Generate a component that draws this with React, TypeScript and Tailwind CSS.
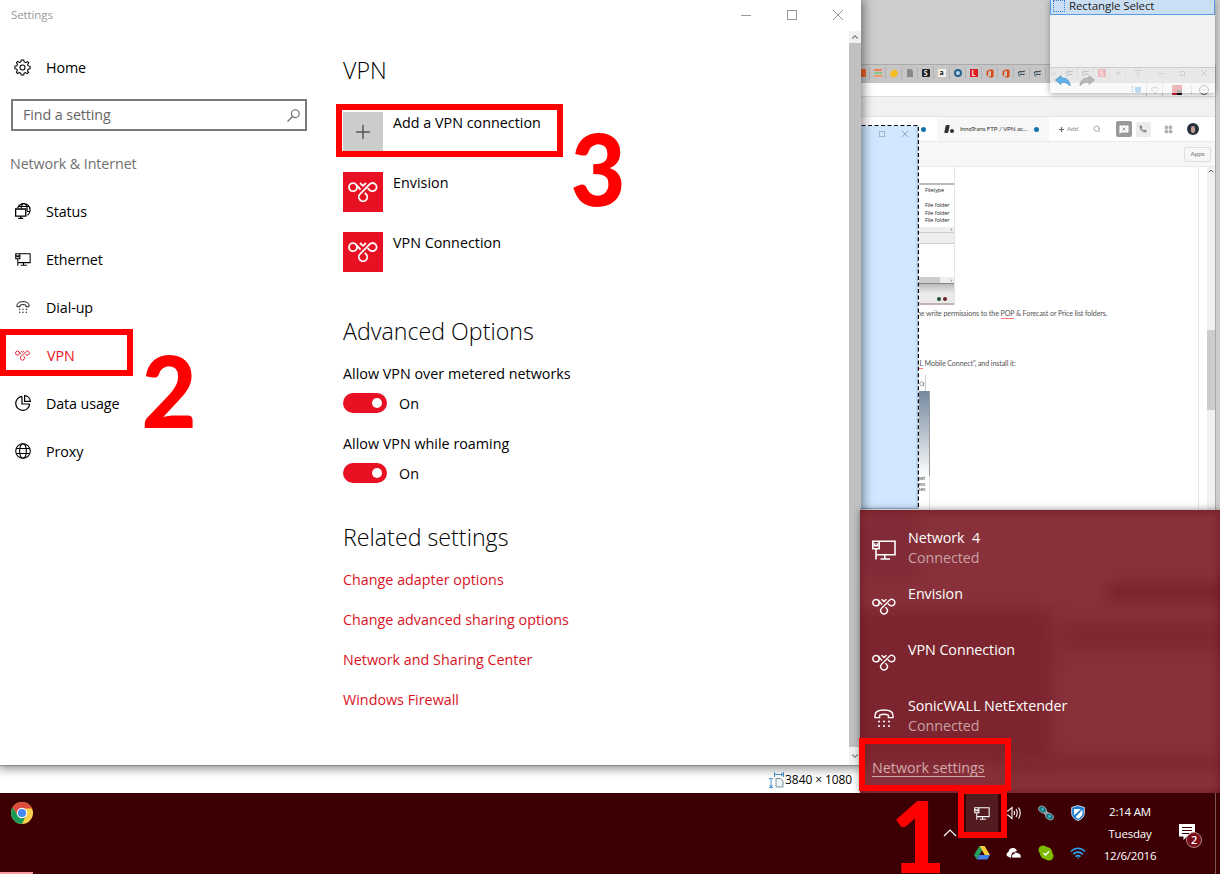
import React from "react";
import {
  Search,
  Plus,
  Phone,
  Heart,
  LayoutGrid,
  MessageSquareX,
  ChevronUp,
  ChevronDown,
} from "lucide-react";
import { clsx } from "clsx";

type IconProps = { className?: string };

// VpnIcon: looped ribbon used for every VPN entry
const VpnIcon = ({ className }: IconProps) => (
  <svg viewBox="0 0 30 20" className={className} fill="none" stroke="currentColor" strokeWidth="1.8">
    <circle cx="5" cy="5.2" r="4" />
    <path d="M8 2.6 L12.6 7.6" />
    <path d="M12 12.2 L21 3 A4.1 4.1 0 1 1 21.4 7.8 L19.6 6.2" />
    <path d="M12 12.2 A4.2 4.2 0 1 0 18.4 12.6 L16.8 10.8" />
    <path d="M12 1 L15 3.8 L18 1" />
  </svg>
);

// EthernetIcon: monitor with a plug in its upper left corner
const EthernetIcon = ({ className }: IconProps) => (
  <svg viewBox="0 0 24 20" className={className} fill="none" stroke="currentColor" strokeWidth="1.6">
    <path d="M7.5 1.2 H23 V14.8 H4.5 M12.8 15 V18.8 M8.5 19 H18" />
    <path d="M0.8 1.2 H7.2 V8.8 H0.8 Z M4 9 V19.5 M2.6 3.2 V5.8 H5.4 V3.2" />
  </svg>
);

const DialIcon = ({ className }: IconProps) => (
  <svg viewBox="0 0 20 18" className={className} fill="none" stroke="currentColor" strokeWidth="1.4">
    <path d="M1 6.6 C1 2.6 5.4 1 10 1 C14.6 1 19 2.6 19 6.6 V8.6 H14.4 V6.2 C12 5.2 8 5.2 5.6 6.2 V8.6 H1 Z" />
    <path d="M4 12.5 H6 M9 12.5 H11 M14 12.5 H16 M4 17 H6 M9 17 H11 M14 17 H16" strokeWidth="1.6" />
  </svg>
);

const GearIcon = () => (
  <svg viewBox="0 0 18 18" className="size-[17px]" fill="none" stroke="black" strokeWidth="1.1">
    <circle cx="9" cy="9" r="2.7" />
    <path d="M7.7 1 H10.3 L10.8 3.1 L12.4 3.8 L14.3 2.7 L15.6 4 L14.4 5.8 L15 7.3 L17 7.7 V10.3 L15 10.8 L14.3 12.3 L15.4 14.2 L14 15.5 L12.2 14.4 L10.7 15 L10.3 17 H7.7 L7.2 15 L5.7 14.3 L3.8 15.4 L2.5 14 L3.6 12.2 L3 10.7 L1 10.3 V7.7 L3 7.2 L3.7 5.7 L2.6 3.8 L4 2.5 L5.8 3.6 L7.3 3 Z" />
  </svg>
);

const GlobeIcon = () => (
  <svg viewBox="0 0 16 16" className="size-4" fill="none" stroke="black" strokeWidth="1.1">
    <circle cx="8" cy="8" r="7.3" />
    <ellipse cx="8" cy="8" rx="3.4" ry="7.3" />
    <path d="M1.4 5.5 H14.6 M1.4 10.5 H14.6" />
  </svg>
);

const StatusIcon = () => (
  <svg viewBox="0 0 16 16" className="size-4" fill="none" stroke="black" strokeWidth="1.1">
    <path d="M2.5 5 A6.5 6.5 0 1 1 12.5 12.3 M6 5.5 C6.5 2.5 7.5 .7 9 .7 C11 .7 12.6 4 12 8 M3.4 3.5 H14 M12 8.5 H15.5" />
    <path d="M.6 6 H10.8 V13.2 H.6 Z M5.8 13.2 V15.3 M3.2 15.4 H8.2" strokeWidth="1.3" />
  </svg>
);

const UsageIcon = () => (
  <svg viewBox="0 0 16 16" className="size-4" fill="none" stroke="black" strokeWidth="1.2">
    <path d="M7 1.4 A7 7 0 1 0 14.7 9 M7 1.4 V9 H14.7" />
    <path d="M9.6 .6 A6.3 6.3 0 0 1 15.4 6.4 H9.6 Z" />
  </svg>
);

const NAV_ITEMS = [
  { label: "Status", icon: <StatusIcon /> },
  { label: "Ethernet", icon: <EthernetIcon className="h-[13px] w-4" /> },
  { label: "Dial-up", icon: <DialIcon className="ml-px h-3 w-[14px]" /> },
  { label: "VPN", icon: <VpnIcon className="h-[11px] w-[15px]" />, active: true },
  { label: "Data usage", icon: <UsageIcon /> },
  { label: "Proxy", icon: <GlobeIcon /> },
];

const LINKS = [
  "Change adapter options",
  "Change advanced sharing options",
  "Network and Sharing Center",
  "Windows Firewall",
];

// Sidebar: left settings navigation
const Sidebar = () => (
  <div className="w-[343px] shrink-0 text-[14.3px]">
    <div className="mt-[13px] flex h-12 items-center pl-[14px]">
      <GearIcon />
      <span className="mt-[2px] ml-[15px]">Home</span>
    </div>
    <div className="mt-2 ml-[11px] flex h-8 w-[296px] items-center justify-between border-2 border-[#7a7a7a] pr-[5px] pl-[10px] text-[#666]">
      <span>Find a setting</span>
      <svg viewBox="0 0 13 13" className="size-[13px]" fill="none" stroke="currentColor" strokeWidth="1.1">
        <circle cx="8.3" cy="4.7" r="3.9" />
        <path d="M5.5 7.5 L.5 12.5" />
      </svg>
    </div>
    <div className="mt-[21px] mb-[11px] h-6 pl-[10px] leading-6 text-[#707070]">Network &amp; Internet</div>
    {NAV_ITEMS.map(item => (
      <div key={item.label} className={clsx("flex h-12 items-center pl-[15px]", item.active && "text-[#e81123]")}>
        <span className={clsx("w-[31px] shrink-0", item.active && "mr-px")}>{item.icon}</span>
        <span className="mt-[2px]">{item.label}</span>
      </div>
    ))}
  </div>
);

const Tile = ({ label, add }: { label: string; add?: boolean }) => (
  <div className="flex h-10 gap-[10px]">
    <div className={clsx("flex size-10 items-center justify-center", add ? "bg-[#ccc]" : "bg-[#e81123] text-white")}>
      {add ? <Plus className="size-[22px] text-[#555]" strokeWidth={1.6} /> : <VpnIcon className="h-5 w-[30px]" />}
    </div>
    <span className="leading-[22px]">{label}</span>
  </div>
);

const Toggle = ({ label }: { label: string }) => (
  <div className="h-[70px]">
    <div className="leading-6">{label}</div>
    <div className="mt-[7px] flex h-5 items-center gap-3">
      <div className="flex h-5 w-11 items-center justify-end rounded-full bg-[#e81123] pr-[5px]">
        <div className="size-[10px] rounded-full bg-white" />
      </div>
      <span className="mt-px">On</span>
    </div>
  </div>
);

const SettingsWindow = () => (
  <div className="absolute top-0 left-0 flex h-[765px] w-[861px] flex-col bg-white shadow-[0_1px_10px_2px_rgba(0,0,0,0.5)]">
    <div className="flex h-[31px] items-center justify-between pr-[18px] pb-px pl-[11px] text-[11.5px] text-[#999]">
      <span>Settings</span>
      <div className="flex items-center gap-9">
        <div className="h-px w-[10px] bg-[#999]" />
        <div className="size-[10px] border border-[#999]" />
        <svg viewBox="0 0 10 10" className="size-[10px]" stroke="#999">
          <path d="M0 0 L10 10 M10 0 L0 10" />
        </svg>
      </div>
    </div>
    <div className="-mt-px flex flex-1">
      <Sidebar />
      <div className="flex-1 text-[14.3px] tracking-[0.02px]">
        <h1 className="mt-[24px] h-8 text-[23.2px] leading-8 font-light">VPN</h1>
        <div className="mt-[26px] flex flex-col gap-5">
          <Tile label="Add a VPN connection" add />
          <Tile label="Envision" />
          <Tile label="VPN Connection" />
        </div>
        <h2 className="mt-[43px] mb-[15px] h-8 text-[23.2px] leading-8 font-light">Advanced Options</h2>
        <Toggle label="Allow VPN over metered networks" />
        <Toggle label="Allow VPN while roaming" />
        <h2 className="mt-[19px] mb-[7px] h-8 text-[23.2px] leading-8 font-light">Related settings</h2>
        {LINKS.map(link => (
          <div key={link} className="h-10 leading-10 text-[#da1224]">{link}</div>
        ))}
      </div>
      <div className="mt-px flex w-3 flex-col bg-[#f1f1f1] text-[#888]">
        <ChevronUp className="m-px size-[10px]" strokeWidth={3} />
        <div className="h-[704px] bg-[#c1c1c1]" />
        <ChevronDown className="mx-px mt-1 size-[10px]" strokeWidth={3} />
      </div>
    </div>
  </div>
);

// Small favicons of the bookmarks row, in order
const FAVICONS = [
  <div className="size-2 bg-[#f0652b]" />,
  <div className="flex h-2 w-2 flex-col justify-between">
    <i className="h-[2px] bg-[#ef8354]" /><i className="h-[2px] bg-[#8bc48a]" /><i className="h-[2px] bg-[#ef9a64]" />
  </div>,
  <div className="h-[7px] w-2 -rotate-45 rounded-full bg-[#f7bd28]" />,
  <div className="h-2 w-[6px] rounded-tr-[3px] bg-[#888]" />,
  <div className="size-2 rounded-[1px] bg-[#222] text-center text-[7px] leading-2 font-bold text-white">S</div>,
  <div className="size-2 bg-[#f6f1e8] text-center text-[8px] leading-[7px] font-bold text-black">a</div>,
  <div className="size-2 rounded-full border-2 border-[#27628e] bg-[#b6d5e8]" />,
  <div className="size-2 bg-[#df1f26] text-center text-[7px] leading-2 font-bold text-white">L</div>,
  <OfficeMark />,
  <OfficeMark />,
  <Swirl />,
  <Swirl />,
  <span className="text-[7px] text-[#6b8fa8]">m</span>,
  <Swirl />,
  <Swirl />,
  <div className="size-2 bg-[#d92332] text-center text-[7px] leading-2 text-white">S</div>,
  <Plus className="size-2" />,
];

function OfficeMark() {
  return (
    <svg viewBox="0 0 8 9" className="h-[9px] w-2">
      <path d="M.5 2 L5 .2 L7.5 1 V8 L5 8.8 L.5 7 L5 7.4 V1.8 L2.2 2.5 V6 L.5 6.8 Z" fill="#d94816" />
    </svg>
  );
}

function Swirl() {
  return (
    <svg viewBox="0 0 10 8" className="h-[7px] w-[9px]" fill="none" stroke="#39454d" strokeWidth="1.3">
      <path d="M1 3.5 C3 0 5 3.5 9 1 M3 5.5 C4 3 6 6.5 8.5 4.5" />
      <path d="M1.5 3 V6 L3.5 7.5" stroke="#5d8ca6" />
    </svg>
  );
}

const BrowserWindow = () => (
  <div className="absolute top-[64px] left-[854px] flex h-[446px] w-[362px] flex-col border-t border-r border-[#aaa] bg-white font-[Lato,sans-serif] text-[#555]">
    {/* Tab strip */}
    <div className="flex h-[18px] shrink-0 items-center justify-between bg-[#c6c6c6] pb-[2px]">
      <div className="flex">
        {FAVICONS.map((icon, i) => (
          <div key={i} className="flex h-3 w-4 items-center justify-center border-r border-[#b3b3b3]">
            {icon}
          </div>
        ))}
      </div>
      <div className="flex items-center gap-4 pr-2 text-[#777]">
        <svg viewBox="0 0 8 6" className="h-[6px] w-2" stroke="currentColor"><path d="M0 .5 H8 M2 3 H6 M3 5.5 H5" /></svg>
        <div className="h-px w-[6px] bg-[#777]" />
        <div className="size-[5px] border border-[#777]" />
        <svg viewBox="0 0 6 6" className="size-[6px]" stroke="currentColor"><path d="M0 0 L6 6 M6 0 L0 6" /></svg>
      </div>
    </div>
    {/* Address bar */}
    <div className="flex h-[14px] shrink-0 items-center justify-end border-b border-[#ddd] pr-[6px]">
      <span className="text-[7px] text-[#3f8fcb]">1</span>
      <div className="ml-px size-[6px] rounded-b-full bg-[#2b94e0]" />
      <div className="ml-[5px] flex h-[14px] w-[17px] items-center justify-center border-x border-[#ccc]">
        <Heart className="size-2" />
      </div>
      <div className="ml-[9px] flex size-[10px] items-end justify-end rounded-[1px] bg-[#d71f2b]">
        <div className="size-[5px] bg-[#111]" />
      </div>
      <div className="ml-[9px] h-2 w-px bg-[#bbb]" />
      <div className="ml-[7px] flex size-[10px] items-center justify-center rounded-full border border-[#555]">
        <ChevronDown className="size-[6px]" />
      </div>
    </div>
    <div className="h-5 shrink-0 border-b border-[#e4e4e4] bg-[#f1f1f1]" />
    {/* Workspace tabs */}
    <div className="flex h-6 shrink-0 items-center">
      <div className="flex w-[83px] justify-end pr-[11px]">
        <div className="size-[5px] rounded-full bg-[#1073ac]" />
      </div>
      <div className="flex h-6 w-[112px] items-center bg-[#f7f7f7] pl-2">
        <div className="h-2 w-[4px] skew-x-[-12deg] rounded-[1px] bg-[#333]" />
        <div className="mt-1 ml-px size-[4px] rounded-full bg-[#333]" />
        <span className="ml-[6px] w-[67px] text-[6.3px] whitespace-nowrap text-[#333]">InnoTrans FTP / VPN ac...</span>
        <div className="ml-[7px] size-[5px] rounded-full bg-[#1073ac]" />
      </div>
      <Plus className="ml-[9px] size-[7px] text-[#666]" strokeWidth={4} />
      <span className="ml-[2px] text-[6.3px] text-[#888]">Add</span>
      <Search className="ml-[15px] size-2 text-[#aaa]" strokeWidth={3} />
      <div className="ml-[15px] flex size-[16px] items-center justify-center rounded-[2px] border-2 border-[#999] bg-[#999] text-[#999]">
        <MessageSquareX className="size-[13px] fill-white" strokeWidth={2} />
      </div>
      <div className="ml-1 flex size-[15px] items-center justify-center rounded-[2px] bg-[#ececec]">
        <Phone className="size-[8px] fill-[#888] text-[#888]" strokeWidth={1} />
      </div>
      <LayoutGrid className="ml-[13px] size-[9px] fill-[#aaa] text-[#aaa]" />
      <div className="ml-[14px] flex size-3 items-center justify-center rounded-full bg-[#25313a]">
        <div className="h-[7px] w-1 rounded-full bg-[#c69c94]" />
      </div>
    </div>
    <div className="flex h-[26px] shrink-0 items-center justify-end border-y border-[#e9e9e9] bg-[#f7f7f7] pr-1">
      <div className="flex h-[15px] w-[27px] items-center justify-center rounded-[2px] border border-[#ddd] text-[6.5px] text-[#777]">Apps</div>
    </div>
    {/* Article body */}
    <div className="flex min-h-0 flex-1">
      <div className="w-[345px] border-r border-[#e4e4e4]">
        <div className="flex h-[138px] w-[101px] flex-col border-r border-[#e4e4e4] pt-[16px] font-['Open_Sans',sans-serif] text-[5.5px] text-[#222]">
          <div className="h-[2px] bg-[#bbb]" />
          <div className="h-[42px] pt-[2px] pl-[71px] leading-[7.5px]">
            <div className="mb-2">Filetype</div>
            <div>File folder</div>
            <div>File folder</div>
            <div>File folder</div>
          </div>
          <div className="h-[5px] bg-[#eee] pr-[2px] text-right leading-[5px]">›</div>
          <div className="h-[12px] border-y border-[#ccc] bg-[#eee]" />
          <div className="h-[34px]" />
          <div className="flex h-[6px] items-center justify-between bg-[#eee] pr-[2px] leading-[5px]">
            <div className="h-[6px] w-[86px] bg-[#ccc]" />›
          </div>
          <div className="h-[11px] border-t border-[#888] bg-linear-to-b from-[#bbb] to-[#eee]" />
          <div className="flex h-[11px] items-center justify-end gap-[2px] border-b-2 border-[#c5b3b3] bg-[#eaeaea] pr-[7px]">
            <div className="size-1 rounded-full bg-[#244f2b]" />
            <div className="size-1 rounded-full bg-[#6b1f27]" />
          </div>
        </div>
        <p className="mt-1 pl-[63px] text-[7.1px] leading-[10px] whitespace-nowrap">
          ne write permissions to the <span className="border-b border-[#f77]">POP</span> &amp; Forecast or Price list folders.
        </p>
        <p className="mt-10 pl-[62px] text-[7.1px] leading-[10px] whitespace-nowrap">
          <span className="border-b border-[#f77]">LL</span> Mobile Connect", and install it:
        </p>
        <div className="mt-[6px] ml-[63px] flex h-[16px] w-[9px] items-end justify-end border-r border-[#ccc]">
          <Search className="mb-1 size-[6px]" />
        </div>
        <div className="h-[85px] w-[76px] border-r border-[#999] bg-linear-to-b from-[#76899e] to-white" />
        <div className="h-[40px] w-[76px] border-r border-[#e2e2e2] pr-1 text-right text-[5px] leading-[5.5px]">
          set<br />ess<br />ses
        </div>
      </div>
      <div className="ml-[8px] w-2 bg-[#f1f1f1]">
        <ChevronUp className="size-2" strokeWidth={3} />
        <div className="mt-[155px] h-[80px] bg-[#cdcdcd]" />
      </div>
    </div>
  </div>
);

// HistoryPanel: translucent tool panel floating over the browser
const HistoryPanel = () => (
  <div className="absolute top-0 left-[1050px] flex h-[93px] w-[165px] flex-col bg-[#f7f7f7]/70 shadow-[0_1px_6px_rgba(0,0,0,0.35)]">
    <div className="flex h-[15px] shrink-0 items-center gap-1 border border-t-0 border-[#569de5] bg-[#cbdff4] pb-[2px] pl-[2px] text-[11.5px] text-[#222]">
      <div className="size-[12px] border border-dotted border-[#4182cf]" />
      <span className="leading-[12px]">Rectangle Select</span>
    </div>
    <div className="h-[53px] shrink-0 border-b border-[#ccc] bg-[#f1f1f1]" />
    <div className="flex gap-2 pt-[7px] pl-[5px]">
      <svg viewBox="0 0 16 12" className="h-3 w-4" fill="#62b3e9" stroke="#368bc5" strokeWidth=".7">
        <path d="M.5 5 L6 .8 V3 C12 2.8 15 6 15 11 C13 8 10 7 6 7.2 V9.5 Z" />
      </svg>
      <svg viewBox="0 0 16 12" className="h-3 w-4 -scale-x-100" fill="#b8b8b8" stroke="#a0a0a0" strokeWidth=".7">
        <path d="M.5 5 L6 .8 V3 C12 2.8 15 6 15 11 C13 8 10 7 6 7.2 V9.5 Z" />
      </svg>
    </div>
  </div>
);

const SelectionArea = () => (
  <div className="absolute top-[125px] left-[855px] flex h-[384px] w-[64px] justify-end gap-[17px] border-b border-[#9ab9d8] bg-[#d0e7ff] pt-[6px] pr-[11px] shadow-[inset_-2px_0_2px_#a3c2e0]">
    <div className="size-[6px] border border-[#9fb6cc]" />
    <svg viewBox="0 0 6 6" className="size-[6px]" stroke="#91a7bc"><path d="M0 0 L6 6 M6 0 L0 6" /></svg>
    <svg viewBox="0 0 64 384" className="absolute inset-0 h-full w-full" fill="none">
      <path d="M0 .5 H63.5 V384" stroke="white" />
      <path d="M0 .5 H63.5 V384" stroke="black" strokeWidth="1.2" strokeDasharray="4 2.5" />
    </svg>
  </div>
);

const NETWORKS = [
  { name: "Network  4", state: "Connected", icon: <EthernetIcon className="h-5 w-6" /> },
  { name: "Envision", icon: <VpnIcon className="h-[17px] w-6" /> },
  { name: "VPN Connection", icon: <VpnIcon className="h-[17px] w-6" /> },
  { name: "SonicWALL NetExtender", state: "Connected", icon: <DialIcon className="h-[18px] w-5" /> },
];

const NetworkFlyout = () => (
  <div className="absolute top-[510px] left-[860px] h-[283px] w-[360px] overflow-hidden bg-[#88313a] text-[14.3px] tracking-[-0.05px] text-white shadow-[0_0_7px_rgba(0,0,0,0.45)]">
    {/* Blurred backdrop patches */}
    <div className="absolute top-[100px] -left-4 h-[155px] w-[208px] bg-[#7c252e] blur-[8px]" />
    <div className="absolute top-[72px] left-[248px] h-5 w-[120px] bg-[#7b252e] blur-[6px]" />
    <div className="absolute top-[112px] left-[200px] h-[28px] w-[170px] bg-[#7e2831] blur-[8px]" />
    <div className="absolute top-[245px] left-[150px] h-4 w-[210px] bg-[#7f2831] blur-[6px]" />
    <div className="absolute top-0 left-0 h-[70px] w-[58px] bg-[#802b36] blur-[8px]" />
    <div className="absolute inset-0 shadow-[inset_0_0_8px_rgba(95,5,15,0.6)]" />
    <div className="relative pt-3">
      {NETWORKS.map(net => (
        <div key={net.name} className="flex h-14 pt-[6px] pl-3">
          <div className="flex h-11 w-9 items-center">
            <span className="flex w-6 justify-center">{net.icon}</span>
          </div>
          <div className="leading-5 whitespace-pre">
            <div>{net.name}</div>
            {net.state && <div className="text-[#c9a0a4]">{net.state}</div>}
          </div>
        </div>
      ))}
      <div className="mt-[11px] ml-3 tracking-normal text-[#d3a9ad]">
        <span className="inline-block border-b border-[#d3a9ad] leading-[17px]">Network settings</span>
      </div>
    </div>
  </div>
);

const StatusStrip = () => (
  <div className="absolute top-[766px] left-0 flex h-7 w-[860px] items-center justify-end bg-white pr-2 text-[12px]">
    <svg viewBox="0 0 17 16" className="h-4 w-[17px]" fill="none" stroke="#4a98d4">
      <path d="M1 6.5 H5 M1 15.5 H5 M3 7 V15 M1.5 13 L3 15 L4.5 13 M6.5 0 V5 M15.5 0 V5 M7 2.5 H15 M13 1 L15 2.5 L13 4" />
      <path d="M8 6.5 H12.5 L15 9 V15 H8 Z" stroke="#7b979e" fill="#eef5f5" />
    </svg>
    <span>3840 × 1080</span>
  </div>
);

const ChromeLogo = () => (
  <svg viewBox="0 0 22 22" className="size-[22px]">
    <circle cx="11" cy="11" r="11" fill="#fdd04a" />
    <path d="M1.5 5.5 A11 11 0 0 1 20.5 5.5 L21 6.5 H11 L6.5 13 Z" fill="#d94c3d" />
    <path d="M1.5 5.5 A11 11 0 0 0 11 22 L15 13.5 H6.8 Z" fill="#189a58" />
    <circle cx="11" cy="11" r="5.2" fill="white" />
    <circle cx="11" cy="11" r="4.1" fill="#4688f4" />
  </svg>
);

const TRAY = [
  <EthernetIcon className="h-[13px] w-4" />,
  <svg viewBox="0 0 16 14" className="h-[14px] w-4" fill="none" stroke="white" strokeWidth="1.1">
    <path d="M0 5 H2 L6 1.5 V12.5 L2 9 H0 M8 5 Q9 7 8 9 M10 3 Q12.5 7 10 11 M12.5 1.5 Q16 7 12.5 12.5" />
  </svg>,
  <svg viewBox="0 0 16 16" className="size-4">
    <path d="M5 5 L11 11" stroke="#98a3a8" strokeWidth="4" />
    <ellipse cx="4.5" cy="4.5" rx="4" ry="3" transform="rotate(30 4.5 4.5)" fill="#1b6e7d" stroke="#93a3a8" />
    <ellipse cx="11.5" cy="11.5" rx="4" ry="3" transform="rotate(30 11.5 11.5)" fill="#1b6e7d" stroke="#93a3a8" />
    <circle cx="4.5" cy="4.5" r="1.4" fill="#39bcc8" /><circle cx="11.5" cy="11.5" r="1.4" fill="#39bcc8" />
  </svg>,
  <svg viewBox="0 0 14 16" className="h-4 w-[14px]">
    <path d="M7 .6 L13.3 2.5 V8 C13.3 12 10 14.5 7 15.5 C4 14.5 .7 12 .7 8 V2.5 Z" fill="#147bd1" stroke="white" strokeWidth=".8" />
    <path d="M3 4 H10 L3 10.5 Z M11.5 4.5 V8.5 C11.5 11 9 13 7 13.8 L4.5 12 Z" fill="white" />
  </svg>,
  <svg viewBox="0 0 16 14" className="h-[14px] w-4">
    <path d="M5.4 0 H10.6 L16 9 H10.8 Z" fill="#fccd3a" />
    <path d="M5.4 0 L8 4.5 L2.7 13.6 L0 9 Z" fill="#23a15d" />
    <path d="M5.4 9 H16 L13.3 13.6 H2.7 Z" fill="#4381ed" />
  </svg>,
  <svg viewBox="0 0 16 12" className="h-3 w-4">
    <path d="M1 9 Q-.5 6 2.5 5 Q3 1 7 1 Q10 1 11 4 L6 6 L5 11 Z" fill="white" />
    <path d="M6 11 Q4.5 7.5 7.5 7 Q9 3.5 12.5 6 Q15.8 7 15 11 Z" fill="white" stroke="#3c0004" strokeWidth=".8" />
  </svg>,
  <svg viewBox="0 0 16 16" className="size-4">
    <circle cx="5" cy="5" r="4.5" fill="#7fba00" /><circle cx="11" cy="11" r="4.5" fill="#7fba00" />
    <circle cx="8" cy="8" r="6.2" fill="#7fba00" /><path d="M5.5 8 L7.5 10 L11 6.5" stroke="white" strokeWidth="1.4" fill="none" />
  </svg>,
  <svg viewBox="0 0 16 12" className="h-3 w-4" fill="none" stroke="#2ba3f0" strokeWidth="1.6">
    <path d="M.8 4.5 Q8 -2 15.2 4.5 M3.2 7.2 Q8 3 12.8 7.2 M5.5 9.6 Q8 7.5 10.5 9.6" /><circle cx="8" cy="11" r=".8" fill="#2ba3f0" stroke="none" />
  </svg>,
];

const Taskbar = () => (
  <div className="absolute top-[793px] left-0 flex h-[81px] w-[1220px] bg-[#3c0004] text-white">
    <div className="flex w-[33px] flex-col justify-between">
      <div className="pt-[9px] pl-[11px]"><ChromeLogo /></div>
      <div className="h-[2px] bg-[#ff9aa1]" />
    </div>
    <div className="flex-1" />
    <svg viewBox="0 0 16 16" className="mt-8 mr-2 size-4" fill="none" stroke="white" strokeWidth="1.2">
      <path d="M2 11 L8 5 L14 11" />
    </svg>
    <div className="grid h-[80px] w-32 grid-cols-4 grid-rows-2">
      {TRAY.map((icon, i) => (
        <div key={i} className={clsx("flex items-center justify-center", i === 0 && "bg-[#531c20]")}>{icon}</div>
      ))}
    </div>
    <div className="w-[72px] pt-[7.5px] text-center text-[11.5px] leading-[22px] tracking-[-0.2px]">
      <div>2:14 AM</div>
      <div>Tuesday</div>
      <div>12/6/2016</div>
    </div>
    <div className="relative mt-[31px] ml-[6px] w-[43px] pl-[7px]">
      <svg viewBox="0 0 16 16" className="size-4">
        <path d="M0 0 H16 V12.5 H8 L4.5 16 V12.5 H0 Z" fill="white" />
        <path d="M3 3.5 H13 M3 6.5 H13 M3 9.5 H10" stroke="#3c0004" />
      </svg>
      <div className="absolute top-2 left-[14px] size-4 rounded-full border border-[#b78388] bg-[#770b18] text-center text-[11px] leading-[14px] font-semibold">2</div>
    </div>
    <div className="w-[5px] border-l border-[#7e5558]" />
  </div>
);

// Step: large red number next to a highlighted frame
const Step = ({ n, className }: { n: number; className: string }) => (
  <div className={clsx("absolute scale-x-95 font-[Lato,sans-serif] text-[100px] leading-[80px] font-black text-[#f00]", className)}>{n}</div>
);

const App = () => (
  <div className="relative h-[874px] w-[1220px] overflow-hidden bg-[#cdcdcd] font-['Open_Sans',sans-serif] tracking-[-0.1px] text-black">
    <BrowserWindow />
    <HistoryPanel />
    <SelectionArea />
    <StatusStrip />
    <SettingsWindow />
    <NetworkFlyout />
    <Taskbar />

    {/* Highlight frames and step numbers */}
    <div className="absolute top-[329px] left-0 h-[47px] w-[133px] border-6 border-[#f00]" />
    <div className="absolute top-[104px] left-[336px] h-[53px] w-[227px] border-6 border-[#f00]" />
    <div className="absolute top-[738px] left-[859px] h-[53px] w-[152px] border-6 border-[#f00]" />
    <div className="absolute top-[788px] left-[958px] h-[50px] w-[49px] border-6 border-[#f00]" />
    <Step n={1} className="top-[794px] left-[889px]" />
    <Step n={2} className="top-[349px] left-[140px]" />
    <Step n={3} className="top-[127px] left-[569px]" />
  </div>
);

export default App;
